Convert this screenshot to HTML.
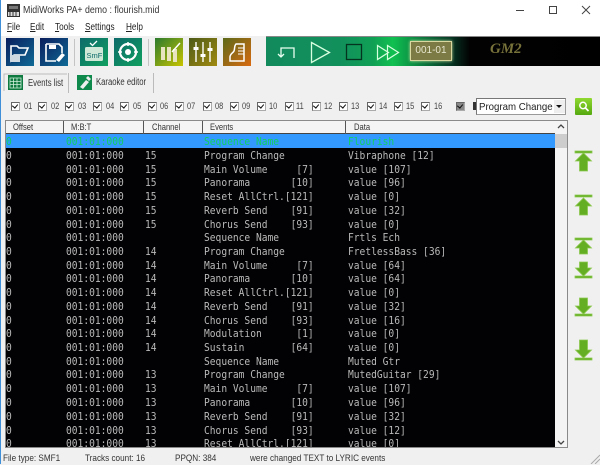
<!DOCTYPE html>
<html><head><meta charset="utf-8">
<style>
html,body{margin:0;padding:0}
body{width:600px;height:464px;position:relative;overflow:hidden;background:#f0f0f0;font-family:"Liberation Sans",sans-serif;color:#222}
.a{position:absolute}
.t{position:absolute;white-space:pre;font-size:9.5px;line-height:13px;transform-origin:left center}
.m{position:absolute;top:21px;font-size:10px;line-height:14px;color:#222;transform:scaleX(.82);transform-origin:left center;white-space:pre}
.m u{text-decoration:underline}
.ck{position:absolute;top:102px;width:7px;height:7px;border:1px solid #666;background:#fff;border-right-color:#aaa;border-bottom-color:#aaa}
.ck:after{content:"";position:absolute;left:1px;top:0;width:3px;height:4px;border:solid #111;border-width:0 1.5px 1.5px 0;transform:rotate(40deg)}
.cl{position:absolute;top:100px;font-size:9.5px;line-height:13px;color:#444;transform:scaleX(.78);transform-origin:left center}
.hs{position:absolute;top:121px;height:13px;width:1px;background:#555}
.h{position:absolute;top:122px;font-size:9.5px;line-height:12px;color:#333;transform:scaleX(.8);transform-origin:left center}
#list{position:absolute;left:6px;top:134px;width:549px;height:313px;background:#020204;overflow:hidden;font-family:"DejaVu Sans Mono","Liberation Mono",monospace;font-size:10.4px;color:#bababa}
.r{position:absolute;left:0;width:549px;height:14px;line-height:14px;white-space:pre}
.r span{position:absolute;top:1px;transform:scaleX(.923);transform-origin:left center}
.c1{left:0}.c2{left:60px}.c3{left:139px}.c4{left:198px}.c5{left:342px}
</style></head><body>
<div class="a" style="left:0;top:0;width:600px;height:36px;background:#fff"></div>
<div class="a" style="left:0;top:0;width:1px;height:464px;background:#3f8fd8"></div>
<svg class="a" style="left:7px;top:4px" width="13" height="13"><rect width="13" height="13" fill="#333"/><rect x="1" y="8" width="11" height="4" fill="#ddd"/><path d="M3 8v4M6 8v4M9 8v4" stroke="#333"/><rect x="2" y="2" width="9" height="3" fill="#777"/></svg>
<div class="t" style="left:23px;top:4px;font-size:10px;color:#333;transform:scaleX(.88)">MidiWorks PA+ demo : flourish.mid</div>
<svg class="a" style="left:510px;top:0" width="90" height="20" fill="none" stroke="#444"><path d="M6 10.500h8"/><rect x="39.500" y="6.500" width="7" height="7"/><path d="M72 6l8 8M80 6l-8 8"/></svg>
<div class="m" style="left:7px"><u>F</u>ile</div>
<div class="m" style="left:30px"><u>E</u>dit</div>
<div class="m" style="left:55px"><u>T</u>ools</div>
<div class="m" style="left:85px"><u>S</u>ettings</div>
<div class="m" style="left:126px"><u>H</u>elp</div>

<svg class="a" style="left:0;top:35px" width="266" height="32">
<defs>
<linearGradient id="b" x1="0" y1="0" x2="1" y2="1"><stop offset="0" stop-color="#0a1d5c"/><stop offset="1" stop-color="#0f6a96"/></linearGradient>
<linearGradient id="g" x1="0" y1="0" x2="1" y2="1"><stop offset="0" stop-color="#0d6a6a"/><stop offset="1" stop-color="#10a060"/></linearGradient>
<linearGradient id="y" x1="0" y1="0" x2="1" y2="1"><stop offset="0" stop-color="#2b7a2e"/><stop offset="1" stop-color="#c8c400"/></linearGradient>
<linearGradient id="o" x1="0" y1="0" x2="1" y2="1"><stop offset="0" stop-color="#4d5a18"/><stop offset="1" stop-color="#a08a10"/></linearGradient>
<linearGradient id="r" x1="0" y1="0" x2="1" y2="1"><stop offset="0" stop-color="#5c6a1a"/><stop offset="1" stop-color="#d86a10"/></linearGradient>
</defs>
<rect x="6" y="3" width="28" height="28" fill="url(#b)"/>
<path d="M11 24V11h6l2 2h9l-3 7H14l-3 5z" fill="none" stroke="#fff" stroke-width="1.600"/><rect x="11" y="20" width="9" height="7" fill="#cfd8e0"/>
<rect x="40" y="3" width="28" height="28" fill="url(#b)"/>
<path d="M46 9h13l3 3v6M46 9v17h10" fill="none" stroke="#fff" stroke-width="1.600"/><rect x="49" y="10" width="7" height="4" fill="#fff"/><path d="M56 25l6-7 3 2-6 7z" fill="#fff"/>
<rect x="80" y="3" width="28" height="28" fill="url(#g)"/>
<rect x="85" y="12" width="18" height="14" rx="1.500" fill="#cfe8d8"/><text x="86.500" y="23" font-size="7.500" font-family="Liberation Sans" fill="#0d6a6a">SmF</text><path d="M90 8l2.500 2.500L97 6" stroke="#fff" stroke-width="1.300" fill="none"/>
<rect x="114" y="3" width="28" height="28" fill="url(#g)"/>
<circle cx="128" cy="17" r="8" fill="none" stroke="#fff" stroke-width="2.200"/><circle cx="128" cy="17" r="3" fill="#fff"/><path d="M128 7v4M128 23v4M118 17h4M134 17h4" stroke="#fff" stroke-width="1.500"/>
<rect x="155" y="3" width="28" height="28" fill="url(#y)"/>
<path d="M161 12h4v13h-4zM167 12h4v14h-4zM173 14h4v13h-4z" fill="#e8e4c0"/><path d="M172 17l8-9" stroke="#fff" stroke-width="1.500"/>
<rect x="189" y="3" width="28" height="28" fill="url(#o)"/>
<path d="M196 7v20M203 7v20M210 7v20" stroke="#fff" stroke-width="1.400"/><path d="M193.500 12h5v3h-5zM200.500 19h5v3h-5zM207.500 13h5v3h-5z" fill="#fff"/>
<rect x="223" y="3" width="28" height="28" fill="url(#r)"/>
<path d="M236 9h8v17h-14v-4c0-3 3-4 4-6s0-5 2-7z" fill="none" stroke="#fff" stroke-width="1.500"/><path d="M238 13h6M238 16h6M238 19h6" stroke="#fff"/>
<path d="M74.500 4v27M148.500 4v27" stroke="#c4c4c4"/>
</svg>

<div class="a" style="left:266px;top:36px;width:334px;height:30px;background:linear-gradient(90deg,#128a5c 0,#12905c 22%,#10a055 32%,#10c050 38%,#0a8040 46%,#063a26 55%,#04140e 59%,#020202 61%,#000 100%);border-top:1px solid #888;box-sizing:border-box"></div>
<svg class="a" style="left:266px;top:36px" width="334" height="30" fill="none">
<path d="M17 18l-3 3-3-3M14 21v-9h13v10" stroke="#e8fff0" stroke-width="1.300" transform="translate(1 0)"/>
<path d="M45.500 6.500l18 10-18 10z" stroke="#d8ffe0" stroke-width="1.300"/>
<rect x="80.500" y="8.500" width="15" height="15" stroke="#04341f" stroke-width="1.300"/>
<path d="M111.500 9.500l11 7-11 7zM121.500 9.500l11 7-11 7z" stroke="#d8ffe0" stroke-width="1.200"/>
</svg>
<div class="a" style="left:410px;top:41px;width:40px;height:18px;background:#7c7a45;border:1px solid #d8d8a0;box-shadow:0 0 3px #cfe0a0;color:#e8e8d0;font-size:10px;line-height:18px;text-align:center">001-01</div>
<div class="a" style="left:490px;top:41px;font-family:'Liberation Serif',serif;font-style:italic;font-weight:bold;font-size:15px;line-height:16px;color:#77723a">GM2</div>

<svg class="a" style="left:3px;top:72px" width="155" height="22">
<path d="M1 19V2h63M65.500 1v20M150.500 1v20" stroke="#bbb" fill="none"/>
<rect x="5" y="3" width="15" height="15" fill="#0e7a40"/><path d="M7 6h11v10H7zM7 9.500h11M7 12.500h11M10.500 6v10M14 6v10" stroke="#cfeeda" fill="none" stroke-width=".8"/>
<path d="M74 3h15v15H74z" fill="#0f8a4c"/><path d="M77 15l6-7 3 2-6 7zM85 4l3 3-2 2-3-3z" fill="#eee"/>
</svg>
<div class="t" style="left:28px;top:77px;font-size:10px;color:#333;transform:scaleX(.77)">Events list</div>
<div class="t" style="left:96px;top:76px;font-size:10px;color:#333;transform:scaleX(.77)">Karaoke editor</div>

<div class="ck" style="left:11px"></div><div class="cl" style="left:24px">01</div>
<div class="ck" style="left:38px"></div><div class="cl" style="left:51px">02</div>
<div class="ck" style="left:65px"></div><div class="cl" style="left:78px">03</div>
<div class="ck" style="left:93px"></div><div class="cl" style="left:106px">04</div>
<div class="ck" style="left:120px"></div><div class="cl" style="left:133px">05</div>
<div class="ck" style="left:148px"></div><div class="cl" style="left:160px">06</div>
<div class="ck" style="left:175px"></div><div class="cl" style="left:187px">07</div>
<div class="ck" style="left:203px"></div><div class="cl" style="left:215px">08</div>
<div class="ck" style="left:230px"></div><div class="cl" style="left:242px">09</div>
<div class="ck" style="left:257px"></div><div class="cl" style="left:269px">10</div>
<div class="ck" style="left:285px"></div><div class="cl" style="left:296px">11</div>
<div class="ck" style="left:312px"></div><div class="cl" style="left:324px">12</div>
<div class="ck" style="left:339px"></div><div class="cl" style="left:351px">13</div>
<div class="ck" style="left:367px"></div><div class="cl" style="left:379px">14</div>
<div class="ck" style="left:394px"></div><div class="cl" style="left:406px">15</div>
<div class="ck" style="left:421px"></div><div class="cl" style="left:434px">16</div>
<div class="ck" style="left:456px;background:#888"></div>
<div class="a" style="left:473px;top:102px;width:4px;height:8px;background:#333"></div>
<div class="a" style="left:476px;top:98px;width:90px;height:17px;background:#fff;border:1px solid #777;border-right-color:#999;border-bottom-color:#999;box-sizing:border-box;overflow:hidden"><div class="t" style="left:2px;top:1px;font-size:10.500px;line-height:15px;color:#222;transform:scaleX(.92)">Program Change</div></div>
<div class="a" style="left:554px;top:100px;width:11px;height:13px;background:#eee"></div>
<svg class="a" style="left:555px;top:105px" width="9" height="4"><path d="M1 0h6L4 3z" fill="#111"/></svg>
<svg class="a" style="left:575px;top:98px" width="18" height="17"><defs><linearGradient id="gb" x1="0" y1="0" x2="0" y2="1"><stop offset="0" stop-color="#8fd830"/><stop offset="1" stop-color="#55a810"/></linearGradient></defs><rect width="17" height="17" rx="1" fill="url(#gb)"/><circle cx="8" cy="7.500" r="3.200" fill="none" stroke="#fff" stroke-width="1.500"/><path d="M10.500 10l3 3" stroke="#fff" stroke-width="1.700"/></svg>

<div class="a" style="left:5px;top:120px;width:563px;height:328px;border:1px solid #8a8a8a;box-sizing:border-box;background:#f4f4f4"></div>
<div class="a" style="left:6px;top:133px;width:549px;height:1px;background:#444"></div>
<div class="hs" style="left:63px"></div><div class="hs" style="left:143px"></div><div class="hs" style="left:202px"></div><div class="hs" style="left:345px"></div>
<div class="h" style="left:13px">Offset</div><div class="h" style="left:71px">M:B:T</div><div class="h" style="left:152px">Channel</div><div class="h" style="left:210px">Events</div><div class="h" style="left:354px">Data</div>
<svg class="a" style="left:555px;top:121px" width="12" height="326"><rect x="0" y="13" width="12" height="14" fill="#cdcdcd"/><path d="M3 7l3-3 3 3M3 320l3 3 3-3" stroke="#444" stroke-width="1.300" fill="none"/></svg>

<div id="list">
<div class="r" style="top:0;background:#3399ff;color:#12d060"><span class="c1">0</span><span class="c2">001:01:000</span><span class="c4">Sequence Name</span><span class="c5">Flourish</span></div>
<div class="r" style="top:14px"><span class="c1">0</span><span class="c2">001:01:000</span><span class="c3">15</span><span class="c4">Program Change</span><span class="c5">Vibraphone [12]</span></div>
<div class="r" style="top:28px"><span class="c1">0</span><span class="c2">001:01:000</span><span class="c3">15</span><span class="c4">Main Volume     [7]</span><span class="c5">value [107]</span></div>
<div class="r" style="top:41px"><span class="c1">0</span><span class="c2">001:01:000</span><span class="c3">15</span><span class="c4">Panorama       [10]</span><span class="c5">value [96]</span></div>
<div class="r" style="top:55px"><span class="c1">0</span><span class="c2">001:01:000</span><span class="c3">15</span><span class="c4">Reset AllCtrl.[121]</span><span class="c5">value [0]</span></div>
<div class="r" style="top:69px"><span class="c1">0</span><span class="c2">001:01:000</span><span class="c3">15</span><span class="c4">Reverb Send    [91]</span><span class="c5">value [32]</span></div>
<div class="r" style="top:83px"><span class="c1">0</span><span class="c2">001:01:000</span><span class="c3">15</span><span class="c4">Chorus Send    [93]</span><span class="c5">value [0]</span></div>
<div class="r" style="top:96px"><span class="c1">0</span><span class="c2">001:01:000</span><span class="c4">Sequence Name</span><span class="c5">Frtls Ech</span></div>
<div class="r" style="top:110px"><span class="c1">0</span><span class="c2">001:01:000</span><span class="c3">14</span><span class="c4">Program Change</span><span class="c5">FretlessBass [36]</span></div>
<div class="r" style="top:124px"><span class="c1">0</span><span class="c2">001:01:000</span><span class="c3">14</span><span class="c4">Main Volume     [7]</span><span class="c5">value [64]</span></div>
<div class="r" style="top:137px"><span class="c1">0</span><span class="c2">001:01:000</span><span class="c3">14</span><span class="c4">Panorama       [10]</span><span class="c5">value [64]</span></div>
<div class="r" style="top:151px"><span class="c1">0</span><span class="c2">001:01:000</span><span class="c3">14</span><span class="c4">Reset AllCtrl.[121]</span><span class="c5">value [0]</span></div>
<div class="r" style="top:165px"><span class="c1">0</span><span class="c2">001:01:000</span><span class="c3">14</span><span class="c4">Reverb Send    [91]</span><span class="c5">value [32]</span></div>
<div class="r" style="top:179px"><span class="c1">0</span><span class="c2">001:01:000</span><span class="c3">14</span><span class="c4">Chorus Send    [93]</span><span class="c5">value [16]</span></div>
<div class="r" style="top:192px"><span class="c1">0</span><span class="c2">001:01:000</span><span class="c3">14</span><span class="c4">Modulation      [1]</span><span class="c5">value [0]</span></div>
<div class="r" style="top:206px"><span class="c1">0</span><span class="c2">001:01:000</span><span class="c3">14</span><span class="c4">Sustain        [64]</span><span class="c5">value [0]</span></div>
<div class="r" style="top:220px"><span class="c1">0</span><span class="c2">001:01:000</span><span class="c4">Sequence Name</span><span class="c5">Muted Gtr</span></div>
<div class="r" style="top:233px"><span class="c1">0</span><span class="c2">001:01:000</span><span class="c3">13</span><span class="c4">Program Change</span><span class="c5">MutedGuitar [29]</span></div>
<div class="r" style="top:247px"><span class="c1">0</span><span class="c2">001:01:000</span><span class="c3">13</span><span class="c4">Main Volume     [7]</span><span class="c5">value [107]</span></div>
<div class="r" style="top:261px"><span class="c1">0</span><span class="c2">001:01:000</span><span class="c3">13</span><span class="c4">Panorama       [10]</span><span class="c5">value [96]</span></div>
<div class="r" style="top:275px"><span class="c1">0</span><span class="c2">001:01:000</span><span class="c3">13</span><span class="c4">Reverb Send    [91]</span><span class="c5">value [32]</span></div>
<div class="r" style="top:289px"><span class="c1">0</span><span class="c2">001:01:000</span><span class="c3">13</span><span class="c4">Chorus Send    [93]</span><span class="c5">value [12]</span></div>
<div class="r" style="top:302px"><span class="c1">0</span><span class="c2">001:01:000</span><span class="c3">13</span><span class="c4">Reset AllCtrl.[121]</span><span class="c5">value [0]</span></div>
</div>

<svg class="a" style="left:574px;top:148px" width="20" height="216">
<g fill="#63ae22" stroke="#8cc850" stroke-width=".8">
<path d="M1 3h17v2H1z"/><path d="M9.500 5l8 8h-4v10h-8V13h-4z"/>
<path d="M1 47h17v2H1z"/><path d="M9.500 50l8 8h-4v9h-8v-9h-4z"/>
<path d="M1 90h17v2H1z"/><path d="M9.500 92l8 8h-4v6h-8v-6h-4z"/>
<path d="M5.500 114h8v6h4l-8 8-8-8h4z"/><path d="M1 128h17v2H1z"/>
<path d="M5.500 150h8v8h4l-8 8-8-8h4z"/><path d="M1 166h17v2H1z"/>
<path d="M5.500 192h8v10h4l-8 8-8-8h4z"/><path d="M1 210h17v2H1z"/>
</g></svg>

<div class="t" style="left:3px;top:452px;color:#333;transform:scaleX(.86)">File type: SMF1</div>
<div class="t" style="left:85px;top:452px;color:#333;transform:scaleX(.86)">Tracks count: 16</div>
<div class="t" style="left:175px;top:452px;color:#333;transform:scaleX(.86)">PPQN: 384</div>
<div class="t" style="left:250px;top:452px;color:#333;transform:scaleX(.86)">were changed TEXT to LYRIC events</div>
<svg class="a" style="left:590px;top:454px" width="10" height="10"><path d="M1 10l9-9M5 10l5-5" stroke="#aaa"/></svg>
</body></html>
